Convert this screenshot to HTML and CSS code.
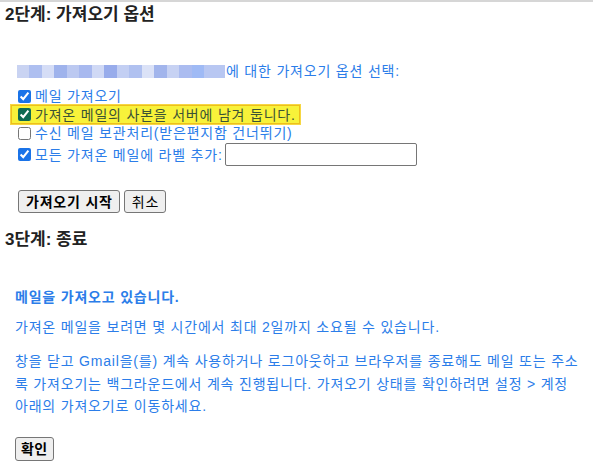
FILE: index.html
```html
<!DOCTYPE html>
<html lang="ko">
<head>
<meta charset="utf-8">
<link rel="stylesheet" href="styles.css">
</head>
<body>
<div class="topline"></div>
<h2 class="step">2단계: 가져오기 옵션</h2>
<div class="options">
  <div class="for-line"><span class="blurred"></span>에 대한 가져오기 옵션 선택:</div>
  <label class="opt"><input type="checkbox" checked>메일 가져오기</label>
  <label class="opt hl"><input type="checkbox" checked>가져온 메일의 사본을 서버에 남겨 둡니다.</label>
  <label class="opt"><input type="checkbox">수신 메일 보관처리(받은편지함 건너뛰기)</label>
  <label class="opt last"><input type="checkbox" checked>모든 가져온 메일에 라벨 추가:<input type="text" class="label-input"></label>
  <div class="buttons">
    <button class="btn bold">가져오기 시작</button>
    <button class="btn">취소</button>
  </div>
</div>
<h2 class="step step3">3단계: 종료</h2>
<div class="finish">
  <p class="strong">메일을 가져오고 있습니다.</p>
  <p class="note">가져온 메일을 보려면 몇 시간에서 최대 2일까지 소요될 수 있습니다.</p>
  <p class="para">창을 닫고 Gmail을(를) 계속 사용하거나 로그아웃하고 브라우저를 종료해도 메일 또는 주소록 가져오기는 백그라운드에서 계속 진행됩니다. 가져오기 상태를 확인하려면 설정 &gt; 계정 아래의 가져오기로 이동하세요.</p>
  <button class="btn ok">확인</button>
</div>
</body>
</html>
```

FILE: styles.css
```css
html, body {
  margin: 0;
  padding: 0;
  background: #fff;
}
body {
  font-family: "Liberation Sans", "Noto Sans CJK KR", sans-serif;
  font-size: 14px;
  color: #222;
}
.topline {
  height: 2px;
  background: #d6d6d6;
}
.step {
  margin: 0;
  padding: 3px 0 0 5px;
  font-size: 17px;
  font-weight: bold;
  line-height: 20px;
  color: #222;
}
.options {
  padding: 37px 0 0 17px;
  color: #2b7de9;
  letter-spacing: 0.8px;
}
.for-line {
  display: flex;
  align-items: center;
  height: 18px;
  line-height: 18px;
  margin-bottom: 7px;
}
.blurred {
  display: inline-block;
  width: 208px;
  height: 13px;
  margin-right: 1px;
  background:
    linear-gradient(90deg,
      #c9d3f2 0 6%, #aebff0 6% 12%, #d5ddf6 12% 18%, #9fb3ec 18% 24%,
      #bcc9f1 24% 30%, #a8b9ef 30% 36%, #d0d9f5 36% 42%, #98aceb 42% 48%,
      #c3cff3 48% 54%, #b0c1f0 54% 60%, #dbe2f7 60% 66%, #a2b5ec 66% 72%,
      #c7d2f3 72% 78%, #abbcf0 78% 84%, #9fbaf5 84% 90%, #b8c7f2 90% 100%);
}
.opt {
  display: flex;
  align-items: center;
  height: 18px;
  line-height: 18px;
  white-space: nowrap;
  width: max-content;
}
.opt input[type=checkbox] {
  width: 13px;
  height: 13px;
  margin: 0 4px 0 1px;
  accent-color: #1a73e8;
}
.opt.hl {
  margin: 0 0 0 -6px;
  padding: 0 3px 0 5px;
  height: 17px;
  background: #f8f23a;
  border: 1px solid #eebf1c;
  box-shadow: 0 0 0 1px #f6d743;
  color: #3b5236;
}
.opt.hl input[type=checkbox] {
  accent-color: #0f6a52;
}
.opt.last {
  height: 23px;
  margin-top: 1px;
}
.opt .label-input {
  width: 186px;
  height: 19px;
  margin: 0 0 0 2px;
  padding: 1px 2px;
  border: 1px solid #767676;
  border-radius: 2px;
  box-sizing: content-box;
}
.buttons {
  display: flex;
  gap: 4px;
  margin-top: 24px;
  margin-left: 1px;
}
.btn {
  font-family: "Liberation Sans", "Noto Sans CJK KR", sans-serif;
  font-size: 14px;
  letter-spacing: 0.8px;
  color: #000;
  background: #efefef;
  border: 1px solid #767676;
  border-radius: 3px;
  height: 23px;
  padding: 0 6px 0 7px;
  line-height: 20px;
}
.btn.bold {
  font-weight: bold;
}
.step3 {
  margin-top: 14px;
}
.finish {
  padding: 0 0 0 15px;
  color: #2b7de9;
  letter-spacing: 0.8px;
}
.finish p {
  margin: 0;
}
.strong {
  font-weight: bold;
  margin-top: 37px !important;
  line-height: 20px;
}
.note {
  margin-top: 10px !important;
  line-height: 20px;
}
.para {
  margin-top: 13px !important;
  line-height: 22.5px;
  width: 566px;
}
.btn.ok {
  margin-top: 19px;
  font-weight: bold;
  height: 24px;
  padding: 0 5px;
  letter-spacing: 0.4px;
}
```
